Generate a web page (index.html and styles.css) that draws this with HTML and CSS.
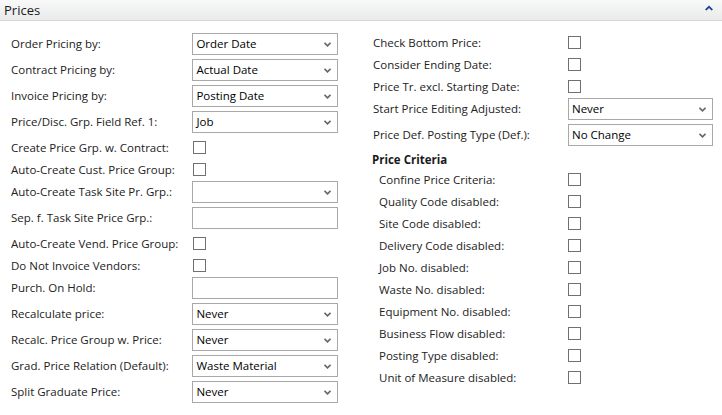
FILE: index.html
```html
<!DOCTYPE html>
<html>
<head>
<meta charset="utf-8">
<link rel="stylesheet" href="styles.css">
</head>
<body>
<div class="header">
  <span class="title">Prices</span>
  <svg class="collapse" width="8" height="6" viewBox="0 0 8 6"><path d="M0 4.5 L4 0.5 L8 4.5 L6.5 5.5 L4 3 L1.5 5.5 Z" fill="#1f3f96"/></svg>
</div>
<div class="content">
  <div class="col left">
    <div class="row dd"><span class="label">Order Pricing by:</span><div class="select"><span>Order Date</span><svg class="arrow" width="7" height="5" viewBox="0 0 7 5"><path d="M0.5 0.8 L3.5 3.8 L6.5 0.8" fill="none" stroke="#666" stroke-width="1.6"/></svg></div></div>
    <div class="row dd"><span class="label">Contract Pricing by:</span><div class="select"><span>Actual Date</span><svg class="arrow" width="7" height="5" viewBox="0 0 7 5"><path d="M0.5 0.8 L3.5 3.8 L6.5 0.8" fill="none" stroke="#666" stroke-width="1.6"/></svg></div></div>
    <div class="row dd"><span class="label">Invoice Pricing by:</span><div class="select"><span>Posting Date</span><svg class="arrow" width="7" height="5" viewBox="0 0 7 5"><path d="M0.5 0.8 L3.5 3.8 L6.5 0.8" fill="none" stroke="#666" stroke-width="1.6"/></svg></div></div>
    <div class="row dd"><span class="label">Price/Disc. Grp. Field Ref. 1:</span><div class="select"><span>Job</span><svg class="arrow" width="7" height="5" viewBox="0 0 7 5"><path d="M0.5 0.8 L3.5 3.8 L6.5 0.8" fill="none" stroke="#666" stroke-width="1.6"/></svg></div></div>
    <div class="row cb"><span class="label">Create Price Grp. w. Contract:</span><span class="check"></span></div>
    <div class="row cb"><span class="label">Auto-Create Cust. Price Group:</span><span class="check"></span></div>
    <div class="row dd"><span class="label">Auto-Create Task Site Pr. Grp.:</span><div class="select"><span></span><svg class="arrow" width="7" height="5" viewBox="0 0 7 5"><path d="M0.5 0.8 L3.5 3.8 L6.5 0.8" fill="none" stroke="#666" stroke-width="1.6"/></svg></div></div>
    <div class="row dd"><span class="label">Sep. f. Task Site Price Grp.:</span><div class="select"><span></span></div></div>
    <div class="row cb"><span class="label">Auto-Create Vend. Price Group:</span><span class="check"></span></div>
    <div class="row cb"><span class="label">Do Not Invoice Vendors:</span><span class="check"></span></div>
    <div class="row dd"><span class="label">Purch. On Hold:</span><div class="select"><span></span></div></div>
    <div class="row dd"><span class="label">Recalculate price:</span><div class="select"><span>Never</span><svg class="arrow" width="7" height="5" viewBox="0 0 7 5"><path d="M0.5 0.8 L3.5 3.8 L6.5 0.8" fill="none" stroke="#666" stroke-width="1.6"/></svg></div></div>
    <div class="row dd"><span class="label">Recalc. Price Group w. Price:</span><div class="select"><span>Never</span><svg class="arrow" width="7" height="5" viewBox="0 0 7 5"><path d="M0.5 0.8 L3.5 3.8 L6.5 0.8" fill="none" stroke="#666" stroke-width="1.6"/></svg></div></div>
    <div class="row dd"><span class="label">Grad. Price Relation (Default):</span><div class="select"><span>Waste Material</span><svg class="arrow" width="7" height="5" viewBox="0 0 7 5"><path d="M0.5 0.8 L3.5 3.8 L6.5 0.8" fill="none" stroke="#666" stroke-width="1.6"/></svg></div></div>
    <div class="row dd"><span class="label">Split Graduate Price:</span><div class="select"><span>Never</span><svg class="arrow" width="7" height="5" viewBox="0 0 7 5"><path d="M0.5 0.8 L3.5 3.8 L6.5 0.8" fill="none" stroke="#666" stroke-width="1.6"/></svg></div></div>
  </div>
  <div class="col right">
    <div class="row cb"><span class="label">Check Bottom Price:</span><span class="check"></span></div>
    <div class="row cb"><span class="label">Consider Ending Date:</span><span class="check"></span></div>
    <div class="row cb"><span class="label">Price Tr. excl. Starting Date:</span><span class="check"></span></div>
    <div class="row dd"><span class="label">Start Price Editing Adjusted:</span><div class="select"><span>Never</span><svg class="arrow" width="7" height="5" viewBox="0 0 7 5"><path d="M0.5 0.8 L3.5 3.8 L6.5 0.8" fill="none" stroke="#666" stroke-width="1.6"/></svg></div></div>
    <div class="row dd"><span class="label">Price Def. Posting Type (Def.):</span><div class="select"><span>No Change</span><svg class="arrow" width="7" height="5" viewBox="0 0 7 5"><path d="M0.5 0.8 L3.5 3.8 L6.5 0.8" fill="none" stroke="#666" stroke-width="1.6"/></svg></div></div>
    <div class="group-title">Price Criteria</div>
    <div class="row cb sub"><span class="label">Confine Price Criteria:</span><span class="check"></span></div>
    <div class="row cb sub"><span class="label">Quality Code disabled:</span><span class="check"></span></div>
    <div class="row cb sub"><span class="label">Site Code disabled:</span><span class="check"></span></div>
    <div class="row cb sub"><span class="label">Delivery Code disabled:</span><span class="check"></span></div>
    <div class="row cb sub"><span class="label">Job No. disabled:</span><span class="check"></span></div>
    <div class="row cb sub"><span class="label">Waste No. disabled:</span><span class="check"></span></div>
    <div class="row cb sub"><span class="label">Equipment No. disabled:</span><span class="check"></span></div>
    <div class="row cb sub"><span class="label">Business Flow disabled:</span><span class="check"></span></div>
    <div class="row cb sub"><span class="label">Posting Type disabled:</span><span class="check"></span></div>
    <div class="row cb sub"><span class="label">Unit of Measure disabled:</span><span class="check"></span></div>
  </div>
</div>
</body>
</html>
```

FILE: styles.css
```css
html, body {
  margin: 0;
  padding: 0;
  background: #ffffff;
}
body {
  font-family: "Open Sans", "Noto Sans", sans-serif;
  font-size: 11.5px;
  color: #222222;
  width: 722px;
  height: 415px;
  overflow: hidden;
}
.header {
  height: 20px;
  border-bottom: 1px solid #d6d6d6;
  background: linear-gradient(#f9f9f9, #e9eaea);
  display: flex;
  align-items: center;
  justify-content: space-between;
  padding: 0 9px 0 4px;
}
.title {
  font-size: 13px;
  color: #1a1a1a;
  line-height: 20px;
  margin-top: -1px;
}
.collapse {
  margin-top: -5px;
}
.content {
  display: flex;
  padding-left: 11px;
}
.col.left {
  width: 327px;
  padding-top: 12px;
}
.col.right {
  margin-left: 35px;
  width: 345px;
  padding-top: 11px;
}
.row {
  display: flex;
}
.row.dd {
  height: 26px;
  align-items: flex-start;
}
.row.cb {
  height: 22px;
  align-items: center;
}
.label {
  white-space: nowrap;
  line-height: 22px;
}
.left .label {
  width: 182px;
}
.right .label {
  width: 195px;
}
.right .row.sub .label {
  width: 189px;
  padding-left: 6px;
}
.select {
  box-sizing: border-box;
  width: 146px;
  height: 22px;
  border: 1px solid #a8a8a8;
  display: flex;
  align-items: center;
  justify-content: space-between;
  padding: 0 6px 0 3px;
  color: #000;
  background: #fff;
}
.right .select {
  width: 145px;
}
.select span {
  line-height: 20px;
}
.arrow {
  display: block;
  margin-top: 1px;
}
.check {
  box-sizing: border-box;
  width: 13px;
  height: 13px;
  border: 1px solid #707070;
  background: #fff;
  display: block;
  margin-top: -1px;
}
.group-title {
  height: 19px;
  line-height: 19px;
  font-weight: bold;
  color: #1a1a1a;
  margin-left: -1px;
}
```
